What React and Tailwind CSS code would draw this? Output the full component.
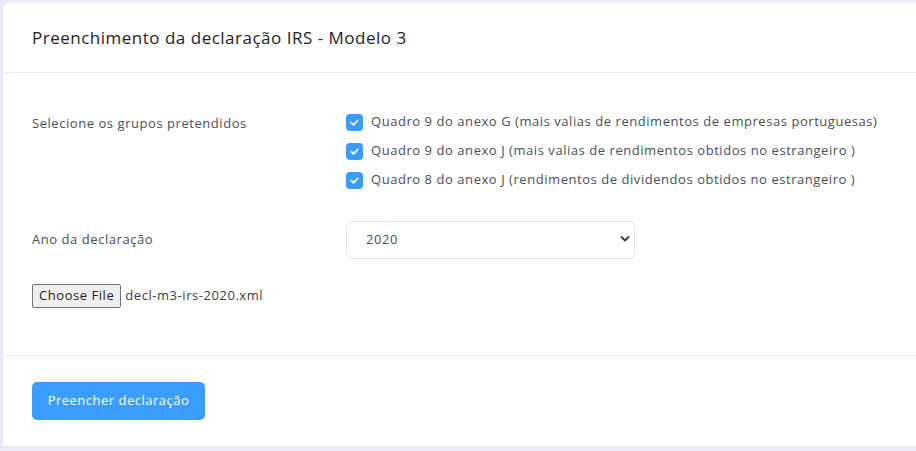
import React, { useState } from "react";

const grupos = [
    "Quadro 9 do anexo G (mais valias de rendimentos de empresas portuguesas)",
    "Quadro 9 do anexo J (mais valias de rendimentos obtidos no estrangeiro )",
    "Quadro 8 do anexo J (rendimentos de dividendos obtidos no estrangeiro )",
];

const CheckBox = ({ checked, onChange }) => (
    <button
        onClick={onChange}
        className={`w-[17px] h-[17px] rounded-[4px] flex items-center justify-center shrink-0 ${checked ? "bg-[#3b9cff]" : "bg-white border border-gray-300"}`}
    >
        {checked && (
            <svg width="11" height="11" viewBox="0 0 12 12" fill="none">
                <path d="M2.5 6.2 L5 8.6 L9.6 3.6" stroke="white" strokeWidth="1.8" strokeLinecap="round" strokeLinejoin="round" />
            </svg>
        )}
    </button>
);

const App = () => {
    const [selected, setSelected] = useState([true, true, true]);
    const [ano, setAno] = useState("2020");

    const toggle = (i) => setSelected(selected.map((v, j) => (j === i ? !v : v)));

    return (
        <div
            className="w-[916px] h-[451px] bg-[#ebebf5] pt-[3px] pl-[3px] overflow-hidden"
            style={{ fontFamily: "'Open Sans', 'Liberation Sans', sans-serif" }}
        >
            <div className="bg-white rounded-tl-[6px] h-[443px] flex flex-col">
                {/* Header */}
                <div className="h-[70px] px-[29px] flex items-center border-b border-[#e9eaee]">
                    <h2 className="text-[17px] text-[#1f2329] tracking-[0.5px]">
                        Preenchimento da declaração IRS - Modelo 3
                    </h2>
                </div>

                {/* Body */}
                <div className="h-[283px] px-[29px] pt-[40px] border-b border-[#e9eaee] text-[13px] text-[#4a4f57] tracking-[0.55px]">
                    <div className="flex">
                        <div className="w-[314px] pt-[1px]">Selecione os grupos pretendidos</div>
                        <div className="flex flex-col gap-[11px]">
                            {grupos.map((g, i) => (
                                <label key={i} className="flex items-center gap-[8px] h-[18px] cursor-pointer">
                                    <CheckBox checked={selected[i]} onChange={() => toggle(i)} />
                                    <span className="whitespace-nowrap">{g}</span>
                                </label>
                            ))}
                        </div>
                    </div>

                    <div className="flex items-center mt-[32px]">
                        <div className="w-[314px]">Ano da declaração</div>
                        <div className="relative w-[289px] h-[38px]">
                            <select
                                value={ano}
                                onChange={(e) => setAno(e.target.value)}
                                className="appearance-none w-full h-full border border-[#e2e6ec] rounded-[5px] pl-[19px] text-[13px] text-[#4a4f57] bg-white tracking-[0.55px]"
                            >
                                <option>2020</option>
                                <option>2019</option>
                                <option>2018</option>
                            </select>
                            <svg className="absolute right-[5px] top-[14px] pointer-events-none" width="10" height="8" viewBox="0 0 10 8" fill="none">
                                <path d="M1.5 2 L5 5.5 L8.5 2" stroke="#343a40" strokeWidth="1.8" strokeLinecap="round" strokeLinejoin="round" />
                            </svg>
                        </div>
                    </div>

                    <div className="flex items-center mt-[25px] gap-[4px]">
                        <button className="h-[24px] px-[6px] text-[13px] text-[#1f1f1f] bg-[#efefef] border border-[#767676] rounded-[2px] tracking-[0.55px]">
                            Choose File
                        </button>
                        <span className="text-[13px] text-[#3a3f45]">decl-m3-irs-2020.xml</span>
                    </div>
                </div>

                {/* Footer */}
                <div className="px-[29px] pt-[26px]">
                    <button className="h-[38px] w-[173px] bg-[#3b9dff] text-white text-[13px] rounded-[5px] tracking-[0.5px]">
                        Preencher declaração
                    </button>
                </div>
            </div>
        </div>
    );
};

export default App;
